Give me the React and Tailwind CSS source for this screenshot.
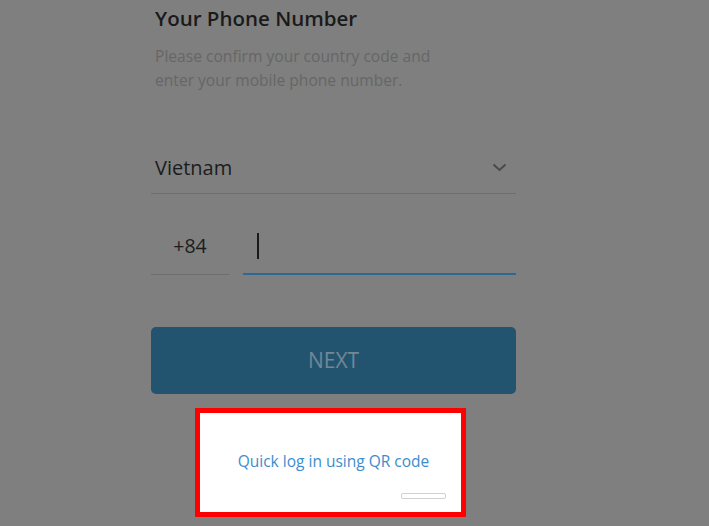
export default function App() {
  return (
    <div className="relative h-[526px] w-[709px] overflow-hidden bg-[#7f7f7f] font-['Open_Sans',sans-serif]">
      <div className="ml-[151px] w-[365px]">
        <h1 className="mt-[4px] pl-[4px] text-[20.5px] font-semibold leading-[28px] text-[#1a1a1a]">
          Your Phone Number
        </h1>
        <p className="mt-[12px] w-[300px] pl-[4px] text-[15.6px] leading-[24px] text-[#666666]">
          Please confirm your country code and enter your mobile phone number.
        </p>

        <div className="mt-[50px] flex h-[52px] items-center justify-between border-b border-[#6e6e6e] pl-[4px] pr-[9px]">
          <span className="text-[20px] text-[#1c1c1c]">Vietnam</span>
          <svg width="15" height="9" viewBox="0 0 15 9" fill="none" stroke="#4a4a4a" strokeWidth="2">
            <path d="M1.5 1.5l6 5.5 6-5.5" />
          </svg>
        </div>

        <div className="mt-[24px] flex h-[57px] items-end gap-[14px]">
          <div className="flex h-full w-[78px] items-center justify-center border-b border-[#6e6e6e] text-[19.5px] text-[#1c1c1c]">
            +84
          </div>
          <div className="flex h-full flex-1 items-center border-b-2 border-[#2a6a94] pl-[14px]">
            <span className="h-[26px] w-[2px] bg-[#1a1a1a]" />
          </div>
        </div>

        <button className="mt-[52px] flex h-[67px] w-full items-center justify-center rounded-[5px] bg-[#23546f] text-[21px] text-[#728797]">
          NEXT
        </button>
      </div>

      <div className="ml-[195px] mt-[14px] h-[109px] w-[271px] border-[5px] border-[#ff0000] bg-white">
        <div className="flex h-full flex-col">
          <span className="mt-[37px] self-center pl-[6px] text-[15.5px] text-[#3d8dcc]">Quick log in using QR code</span>
          <span className="mr-[15px] mt-[20px] h-[6px] w-[45px] self-end rounded-[2px] border border-[#d0d0d0]" />
        </div>
      </div>
    </div>
  );
}
